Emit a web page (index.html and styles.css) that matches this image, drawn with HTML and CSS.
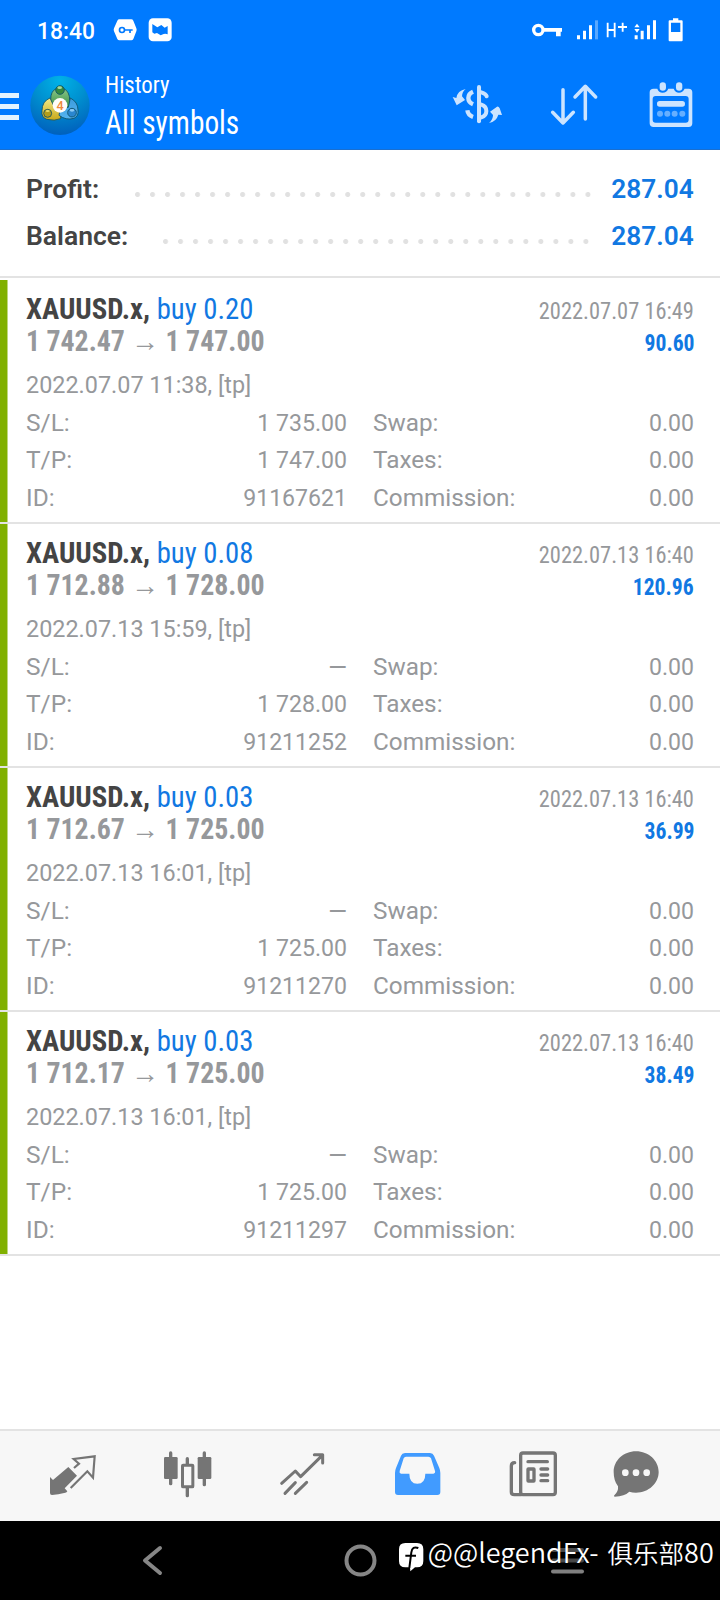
FILE: index.html
```html
<!DOCTYPE html>
<html lang="en">
<head>
<meta charset="utf-8">
<title>History</title>
<link rel="stylesheet" href="styles.css">
</head>
<body>
<div class="screen">
  <header class="top">
    <div class="status">
      <span class="clock"><span class="clock-text">18:40</span></span>
      <svg class="status-left" viewBox="340 50 180 76" width="60" height="25.33">
        <path d="M359 57h36q4 0 6 4l9 23q2 5 0 9l-9 23q-2 4-6 4h-36q-4 0-6-4l-10-23q-2-4 0-9l10-23q2-4 6-4z" fill="#fff"/>
        <circle cx="367" cy="89" r="7.500" fill="none" stroke="#007aff" stroke-width="5"/>
        <path d="M375 89h24M391 89v9" fill="none" stroke="#007aff" stroke-width="5"/>
        <rect x="447" y="54" width="69" height="69" rx="13" fill="#fff"/>
        <path d="M458 71l15 10 12-7 10 8 9-5v25q-6-3-12-1l-9 4-11-7-8 2-6-4z" fill="#007aff"/>
      </svg>
      <svg class="status-right" viewBox="300 50 465 76" width="155" height="25.33">
        <g fill="#fff">
          <circle cx="325" cy="89" r="14" fill="none" stroke="#fff" stroke-width="10"/>
          <path d="M341 83h55v11h-4v14h-14v-14h-37z"/>
          <path d="M441 105h9v12h-9zM459 91h9v26h-9zM477 75h9v42h-9z"/>
          <path d="M495 60h9v57h-9z" opacity=".35"/>
          <path d="M614 105h9v12h-9zM632 91h9v26h-9zM651 75h9v42h-9zM669 60h9v57h-9z"/>
          <path d="M613 81l8-11 8 11zM613 86h16l-8 11z"/>
          <path d="M729 54h16v6h10q3 0 3 3v57q0 3-3 3h-36q-3 0-3-3v-57q0-3 3-3h10zM723 67v28h28v-28z" fill-rule="evenodd"/>
        </g>
        <path d="M533 67v44M554 67v44M533 89h21M564 80h27M578 67v27" fill="none" stroke="#fff" stroke-width="5.500"/>
      </svg>
    </div>
    <div class="toolbar">
      <div class="burger"><i></i><i></i><i></i></div>
      <svg class="logo" viewBox="90 224 180 182" width="60" height="60.66">
        <defs>
          <radialGradient id="sky" cx=".5" cy=".08" r=".9"><stop offset="0" stop-color="#00b2e8"/><stop offset=".5" stop-color="#008fcf"/><stop offset="1" stop-color="#0062bd"/></radialGradient>
          <linearGradient id="gr" x1="0" y1="0" x2="0" y2="1"><stop offset="0" stop-color="#8fc98c"/><stop offset="1" stop-color="#2f8a3c"/></linearGradient>
          <linearGradient id="ye" x1="0" y1="0" x2="0" y2="1"><stop offset="0" stop-color="#f1ea8a"/><stop offset="1" stop-color="#c8a818"/></linearGradient>
          <linearGradient id="bl" x1="0" y1="0" x2="0" y2="1"><stop offset="0" stop-color="#3b9bdd"/><stop offset="1" stop-color="#55b4f0"/></linearGradient>
        </defs>
        <circle cx="180" cy="315" r="89" fill="url(#sky)"/>
        <g stroke="#0d4f66" stroke-width="2.500">
          <path d="M153 312q-4-30 8-42 19-17 38 0 13 13 10 46l-16 14-28-2z" fill="url(#gr)"/>
          <path d="M150 293q-24 10-24 38-3 20 14 26 24 6 42-2l2-28-22-8z" fill="url(#ye)"/>
          <path d="M211 293q23 12 23 36 3 18-12 25-24 7-45-9l4-20 24-4z" fill="url(#bl)"/>
          <circle cx="180" cy="269" r="13" fill="#35893f"/>
          <circle cx="143" cy="339" r="12" fill="#b39d1a"/>
          <circle cx="216" cy="337" r="13" fill="#2a86cf"/>
        </g>
        <ellipse cx="179" cy="262" rx="7" ry="4" fill="#a8d99d"/>
        <ellipse cx="143" cy="332" rx="6" ry="3" fill="#e8dc67"/>
        <ellipse cx="216" cy="330" rx="7" ry="4" fill="#8dcbf5"/>
        <circle cx="180" cy="315" r="22" fill="#fffdfa"/>
        <text class="logo-digit" x="180" y="329" text-anchor="middle">4</text>
      </svg>
      <div class="titles">
        <div class="title-small"><span class="cond">History</span></div>
        <div class="title-big"><span class="cond">All symbols</span></div>
      </div>
      <svg class="actions" viewBox="60 240 735 146" width="245" height="48.67">
        <g fill="none" stroke="#cce4ff" stroke-linecap="round" stroke-linejoin="round">
          <path d="M147 261v103" stroke-width="12"/>
          <path d="M154 277q14 4 16 12M154 314q15 5 15 19 0 14-15 19" stroke-width="12"/>
          <path d="M129 275q-14 6-14 19t14 19M112 331q2 15 17 20" stroke-width="13" stroke-linecap="butt"/>
          <path d="M399 269v100M368 337l31 32 31-32M466 357v-97M435 291l31-32 31 32" stroke-width="10.500"/>
        </g>
        <g fill="#cce4ff">
          <path d="M107 267q-11 9-11 22l9 11-25 16-12-25 11 3q3-22 28-27z"/>
          <path d="M177 369q12-10 12-24l-9-10 21-15q5-1 8 5l7 20-11-1q-6 21-28 25z"/>
          <rect x="689" y="247" width="19" height="25" rx="9.500"/><rect x="738" y="247" width="19" height="25" rx="9.500"/>
          <path fill-rule="evenodd" d="M671 266h11q4 12 16 12t17-12h16q5 12 16 12t17-12h12q11 0 11 11v93q0 11-11 11h-105q-12 0-12-11v-93q0-11 12-11zM677 288q-9 0-9 9v62q0 9 9 9h90q9 0 9-9v-62q0-9-9-9z"/>
          <rect x="681" y="303" width="84" height="17" rx="8"/>
          <g opacity=".5"><circle cx="690" cy="341" r="9"/><circle cx="712" cy="341" r="9"/><circle cx="734" cy="341" r="9"/><circle cx="757" cy="341" r="9"/></g>
        </g>
      </svg>
    </div>
  </header>

  <section class="summary">
    <div class="sum-row"><span class="sum-label">Profit:</span><i class="dots dots-profit"></i><b>287.04</b></div>
    <div class="sum-row"><span class="sum-label">Balance:</span><i class="dots dots-balance"></i><b>287.04</b></div>
  </section>

  <main class="deals">
    <article class="deal">
      <div class="line"><span class="cond sym"><b>XAUUSD.x,</b> <em>buy 0.20</em></span><span class="cond time">2022.07.07 16:49</span></div>
      <div class="line"><span class="cond price">1 742.47 <u>→</u> 1 747.00</span><span class="cond gain">90.60</span></div>
      <div class="details">
        <div class="opened">2022.07.07 11:38, [tp]</div>
        <span>S/L:</span><span>1 735.00</span><span>Swap:</span><span>0.00</span>
        <span>T/P:</span><span>1 747.00</span><span>Taxes:</span><span>0.00</span>
        <span>ID:</span><span>91167621</span><span>Commission:</span><span>0.00</span>
      </div>
    </article>
    <article class="deal">
      <div class="line"><span class="cond sym"><b>XAUUSD.x,</b> <em>buy 0.08</em></span><span class="cond time">2022.07.13 16:40</span></div>
      <div class="line"><span class="cond price">1 712.88 <u>→</u> 1 728.00</span><span class="cond gain">120.96</span></div>
      <div class="details">
        <div class="opened">2022.07.13 15:59, [tp]</div>
        <span>S/L:</span><span class="none">—</span><span>Swap:</span><span>0.00</span>
        <span>T/P:</span><span>1 728.00</span><span>Taxes:</span><span>0.00</span>
        <span>ID:</span><span>91211252</span><span>Commission:</span><span>0.00</span>
      </div>
    </article>
    <article class="deal">
      <div class="line"><span class="cond sym"><b>XAUUSD.x,</b> <em>buy 0.03</em></span><span class="cond time">2022.07.13 16:40</span></div>
      <div class="line"><span class="cond price">1 712.67 <u>→</u> 1 725.00</span><span class="cond gain">36.99</span></div>
      <div class="details">
        <div class="opened">2022.07.13 16:01, [tp]</div>
        <span>S/L:</span><span class="none">—</span><span>Swap:</span><span>0.00</span>
        <span>T/P:</span><span>1 725.00</span><span>Taxes:</span><span>0.00</span>
        <span>ID:</span><span>91211270</span><span>Commission:</span><span>0.00</span>
      </div>
    </article>
    <article class="deal">
      <div class="line"><span class="cond sym"><b>XAUUSD.x,</b> <em>buy 0.03</em></span><span class="cond time">2022.07.13 16:40</span></div>
      <div class="line"><span class="cond price">1 712.17 <u>→</u> 1 725.00</span><span class="cond gain">38.49</span></div>
      <div class="details">
        <div class="opened">2022.07.13 16:01, [tp]</div>
        <span>S/L:</span><span class="none">—</span><span>Swap:</span><span>0.00</span>
        <span>T/P:</span><span>1 725.00</span><span>Taxes:</span><span>0.00</span>
        <span>ID:</span><span>91211297</span><span>Commission:</span><span>0.00</span>
      </div>
    </article>
  </main>

  <nav class="tabs">
    <svg viewBox="141 90 150 150" width="50" height="50">
      <path d="M205 141l26 26-37 38 8 9q-2 4-6 4-22 5-40 7-6 0-6-6v-48l9 9z" fill="#757575"/>
      <path d="M222 144l15-13-16-14 63-8-5 64-17-19-50 50" fill="none" stroke="#757575" stroke-width="6.500"/>
    </svg>
    <svg viewBox="486 90 150 150" width="50" height="50">
      <g fill="#757575"><rect x="507" y="94" width="10" height="102" rx="5"/><rect x="492" y="111" width="41" height="66" rx="4"/><rect x="608" y="94" width="10" height="105" rx="5"/><rect x="593" y="111" width="41" height="66" rx="4"/><rect x="557" y="111" width="10" height="30" rx="5"/><rect x="557" y="195" width="10" height="37" rx="5"/></g>
      <rect x="547.500" y="135.500" width="31" height="65" rx="2" fill="#f7f7f7" stroke="#757575" stroke-width="9"/>
    </svg>
    <svg viewBox="831 90 150 150" width="50" height="50">
      <g fill="none" stroke="#757575" stroke-width="9" stroke-linecap="round" stroke-linejoin="round"><path d="M845 190l41-37 16 17 64-63M943 104h25v25M855 220l31-32M886 220l34-33"/></g>
    </svg>
    <svg viewBox="96 90 150 150" width="50" height="50">
      <path fill-rule="evenodd" d="M135 99h75q9 0 12 8l16 37q3 7 3 15v57q0 9-9 9H114q-9 0-9-9v-57q0-8 3-15l15-37q3-8 12-8zM138 110q-5 0-7 5l-12 38q-2 7 4 8h25q0 30 24 30t24-30h24q7-1 5-8l-12-38q-2-5-8-5z" fill="#419bff"/>
    </svg>
    <svg viewBox="444 90 150 150" width="50" height="50">
      <g fill="none" stroke="#757575" stroke-width="10" stroke-linecap="round" stroke-linejoin="round"><rect x="482" y="99" width="104" height="125" rx="7"/><path d="M464 128q-10 0-10 10v78q0 8 9 8h20"/><path d="M504 125h58M543 147h20M543 165h20M543 182h20"/><rect x="504" y="147" width="18" height="36" rx="1"/></g>
    </svg>
    <svg viewBox="753 90 150 150" width="50" height="50">
      <path d="M828 94c38 0 68 28 68 62s-30 62-68 62q-11 0-20-3-14 14-44 15-4-1-1-4 13-12 11-27-13-17-13-43c0-34 29-62 67-62z" fill="#757575"/>
      <circle cx="796" cy="158" r="10" fill="#f7f7f7"/><circle cx="828" cy="158" r="10" fill="#f7f7f7"/><circle cx="860" cy="158" r="10" fill="#f7f7f7"/>
    </svg>
  </nav>

  <footer class="sysbar">
    <svg viewBox="0 0 720 79" width="720" height="79">
      <g fill="none" stroke="#868686" stroke-width="4" stroke-linecap="round" stroke-linejoin="round"><path d="M160 27l-15 12.500 15 12.500"/><circle cx="360.500" cy="39.500" r="14"/></g>
      <path d="M553 29h29M553 39.500h29" stroke="#484848" stroke-width="4" stroke-linecap="round"/>
      <path d="M553 50.500h29" stroke="#808080" stroke-width="4" stroke-linecap="round"/>
    </svg>
    <div class="mark">
      <svg viewBox="116 366 80 90" width="26.67" height="30">
        <path d="M138 369h35q19 0 19 19v35q0 19-19 19h-6l-14 12-1-12h-14q-19 0-19-19v-35q0-19 19-19z" fill="#fff"/>
        <path d="M177 384q-18-7-21 13l-6 47M138 407h32" fill="none" stroke="#000" stroke-width="6"/>
      </svg>
      <span class="mark-name">@@legendFx-</span><span class="mark-club">俱乐部<span class="mark-num">80</span></span>
    </div>
  </footer>
</div>
</body>
</html>
```
FILE: styles.css
```css
* { box-sizing: border-box; }
body { margin: 0; background: #fff; font-family: Roboto, "Noto Sans CJK SC", sans-serif; }
svg { display: block; flex: none; }
.screen { width: 720px; height: 1600px; display: flex; flex-direction: column; overflow: hidden; }
.cond { display: inline-block; font-family: "Roboto Condensed", Roboto, sans-serif; font-stretch: 75%; white-space: nowrap; transform-origin: left; }

.top { height: 150px; background: #007aff; color: #fff; border-bottom: 1px solid #1a6fd0; }
.status { display: flex; align-items: center; height: 60px; padding: 0 25px 0 37px; }
.clock { width: 76px; font-size: 24px; font-weight: 500; line-height: 60px; padding-top: 2px; }
.clock-text { display: inline-block; transform: scaleX(.95); transform-origin: left; }
.status-left { margin-top: -1px; }
.status-right { margin-left: auto; margin-right: 10px; margin-top: -1px; }
.toolbar { display: flex; align-items: flex-start; height: 89px; }
.burger { width: 19px; padding-top: 33px; display: flex; flex-direction: column; gap: 6px; }
.burger i { height: 5px; background: #e3f3ff; }
.logo { margin: 15px 0 0 11px; }
.logo-digit { font: 500 38px Roboto, sans-serif; fill: #f08a3c; }
.titles { margin-left: 15px; padding-top: 9px; width: 300px; }
.title-small { font-size: 24px; line-height: 32px; }
.title-small .cond { transform: scaleX(.95); }
.title-big { font-size: 33px; line-height: 44px; }
.title-big .cond { transform: scaleX(.89); }
.actions { margin: 20px 25px 0 auto; }

.summary { height: 128px; padding: 16px 26px 0; border-bottom: 2px solid #e3e3e3; flex: none; }
.sum-row { display: flex; height: 47px; line-height: 46px; font-size: 26px; font-weight: 600; color: #444; }
.sum-row b { margin-left: auto; font-weight: 600; color: #1178e2; transform: scaleX(1.01); transform-origin: right; }
.dots { height: 5px; background: radial-gradient(circle at 2.5px 2.5px, #e1e1e1 2.1px, transparent 2.9px) 0 0 / 15.03px 5px repeat-x; }
.sum-label { flex: none; width: 72px; transform: scaleX(1.02); transform-origin: left; }
.sum-row + .sum-row .sum-label { width: 101px; }
.dots-profit { width: 456px; margin: 26px 0 0 36.5px; }
.dots-balance { width: 426px; margin: 26px 0 0 36px; }

.deals { padding-top: 2px; }
.deal { height: 244px; padding: 13px 26px 0; border-bottom: 2px solid #e3e3e3; background: linear-gradient(#80b000, #80b000) 0 0 / 7.5px 100% no-repeat padding-box; }
.line { display: flex; justify-content: space-between; align-items: baseline; height: 32px; line-height: 32px; font-size: 30px; }
.sym { color: #444; transform: scaleX(.957); }
.sym em { font-style: normal; color: #1178e2; }
.price { font-size: 29px; font-weight: 700; color: #96989b; transform: scaleX(.96); }
.price u { text-decoration: none; font-weight: 400; }
.time { font-size: 24px; color: #96989b; transform: scaleX(.935); transform-origin: right; }
.gain { font-size: 24px; font-weight: 700; color: #1178e2; transform: scaleX(.9); transform-origin: right; }
.details { margin-top: 10px; display: grid; grid-template-columns: 100px 221px 1fr 100px; grid-auto-rows: 37.5px; line-height: 37.5px; font-size: 24px; color: #96989b; }
.opened { grid-column: 1 / -1; transform: scaleX(.975); transform-origin: left; }
.details > span:nth-child(4n+2) { transform: scaleX(1.02); transform-origin: left; }
.details > span:nth-child(4n+3), .details > span:nth-child(4n+5) { text-align: right; transform: scaleX(.962); transform-origin: right; }
.details > span:nth-child(4n+4) { margin-left: 26px; transform: scaleX(1.013); transform-origin: left; }
.details > .none { font-size: 25px; }

.tabs { margin-top: auto; height: 92px; flex: none; background: #f7f7f7; border-top: 2px solid #e3e3e3; display: grid; grid-template-columns: 115px 115px 115px 116px 103px 50px; padding: 19px 0 0 47px; }
.sysbar { height: 79px; flex: none; background: #000; position: relative; }
.mark { position: absolute; left: 398px; top: 15px; display: flex; align-items: baseline; height: 32px; color: #fff; font: 350 25.5px/32px "Noto Sans CJK SC", sans-serif; white-space: nowrap; }
.mark svg { align-self: flex-start; margin-top: 6px; }
.mark-name { margin-left: 3px; font-size: 27px; }
.mark-club { margin-left: 9px; }
.mark-num { font-size: 27px; }
```
